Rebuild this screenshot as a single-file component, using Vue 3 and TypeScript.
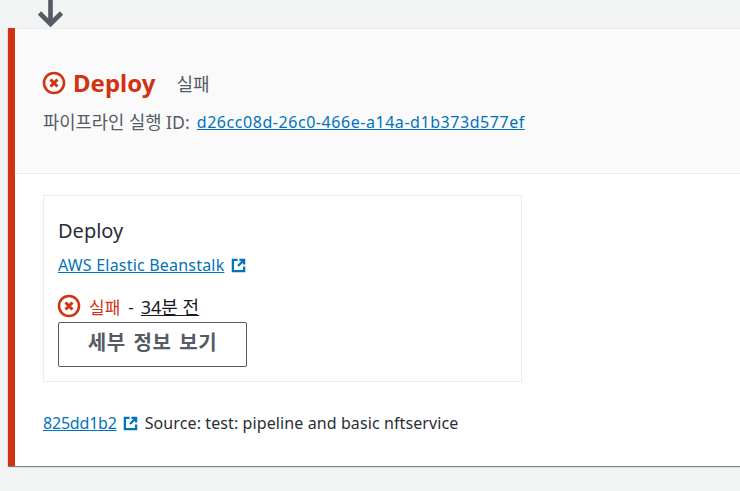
<script setup lang="ts">
const pipelineId = 'd26cc08d-26c0-466e-a14a-d1b373d577ef'
const commit = '825dd1b2'
const message = 'Source: test: pipeline and basic nftservice'
</script>

<template>
  <div class="page">
    <div class="arrow-row">
      <svg class="arrow" width="30" height="28" viewBox="0 0 30 28" aria-hidden="true">
        <path d="M14.5 0V24M3.5 13L14.5 24L25.5 13" fill="none" stroke="#545b64" stroke-width="4.6" />
      </svg>
    </div>

    <section class="stage">
      <header class="stage-head">
        <div class="title-row">
          <svg class="err-icon" viewBox="0 0 24 24" aria-hidden="true">
            <circle cx="12" cy="12" r="10" />
            <path d="M8.5 8.5L15.5 15.5M15.5 8.5L8.5 15.5" />
          </svg>
          <h2 class="stage-name">Deploy</h2>
          <span class="stage-status">실패</span>
        </div>
        <p class="run-id">
          <span>파이프라인 실행 ID:</span>
          <a href="#" class="link id-link">{{ pipelineId }}</a>
        </p>
      </header>

      <div class="stage-body">
        <div class="action">
          <div class="action-name">Deploy</div>
          <div class="provider">
            <a href="#" class="link">AWS Elastic Beanstalk</a>
            <svg class="ext" width="15" height="15" viewBox="0 0 16 16" aria-hidden="true">
              <path d="M7 2H2V14H14V9M9 2H14V7M14 2L7.5 8.5" />
            </svg>
          </div>
          <div class="result">
            <svg class="err-icon" viewBox="0 0 24 24" aria-hidden="true">
              <circle cx="12" cy="12" r="10" />
              <path d="M8.5 8.5L15.5 15.5M15.5 8.5L8.5 15.5" />
            </svg>
            <span class="failed">실패</span>
            <span class="dash">-</span>
            <span class="when">34분 전</span>
          </div>
          <button class="details" type="button">세부 정보 보기</button>
        </div>

        <div class="revision">
          <a href="#" class="link commit">{{ commit }}</a>
          <svg class="ext" width="15" height="15" viewBox="0 0 16 16" aria-hidden="true">
            <path d="M7 2H2V14H14V9M9 2H14V7M14 2L7.5 8.5" />
          </svg>
          <span class="message">{{ message }}</span>
        </div>
      </div>
    </section>
  </div>
</template>

<style>
html,
body {
  margin: 0;
  background: #f2f3f3;
  overflow: hidden;
}
</style>

<style scoped>
.page {
  height: 491px;
  overflow: hidden;
  font-family: 'Noto Sans', 'Noto Sans CJK KR', sans-serif;
  font-size: 16px;
  color: #16191f;
}

.arrow-row {
  height: 28px;
  padding-left: 36px;
}

.arrow {
  display: block;
}

.stage {
  margin-left: 8px;
  height: 438px;
  box-sizing: border-box;
  background: #fff;
  border-left: 7px solid #d13212;
  box-shadow: 0 1px 1px 0 rgba(0, 28, 36, 0.5);
}

.stage-head {
  height: 146px;
  box-sizing: border-box;
  padding: 38px 28px 0;
  background: #fafafa;
  border-top: 1px solid #eaeded;
  border-bottom: 1px solid #eaeded;
}

.title-row {
  display: flex;
  align-items: center;
  height: 32px;
}

.err-icon {
  width: 24px;
  height: 24px;
  margin-left: -1px;
  margin-right: 7px;
  fill: none;
  stroke: #d13212;
  flex: none;
}

.err-icon circle {
  stroke-width: 2.6;
}

.err-icon path {
  stroke-width: 3;
}

.stage-name {
  margin: 0;
  font-size: 24px;
  line-height: 32px;
  font-weight: 700;
  color: #d13212;
}

.stage-status {
  margin-left: 21px;
  font-size: 18px;
  color: #545b64;
}

.run-id {
  display: flex;
  gap: 7px;
  margin: 11px 0 0;
  line-height: 24px;
  font-size: 17.7px;
  color: #545b64;
}

.link {
  color: #0073bb;
  text-decoration: underline;
}

.id-link {
  font-size: 16px;
  letter-spacing: 0.55px;
}

.stage-body {
  padding: 21px 28px 0;
}

.action {
  width: 479px;
  height: 187px;
  box-sizing: border-box;
  padding: 21px 14px 0;
  background: #fff;
  border: 1px solid #eaeded;
}

.action-name {
  font-size: 20px;
  line-height: 28px;
  color: #2a2e35;
}

.provider {
  display: flex;
  align-items: center;
  gap: 7px;
  margin-top: 9px;
  line-height: 22px;
}

.provider .link {
  letter-spacing: 0.2px;
}

.ext {
  flex: none;
  fill: none;
  stroke: #0073bb;
  stroke-width: 2.4;
}

.result {
  display: flex;
  align-items: center;
  margin-top: 18px;
  height: 24px;
  font-size: 17px;
}

.failed {
  margin-left: 1px;
  color: #d13212;
}

.dash {
  margin: 0 7px 0 8px;
}

.when {
  font-size: 18px;
  text-decoration: underline;
}

.details {
  display: block;
  width: 189px;
  height: 45px;
  margin-top: 4px;
  padding: 0 0 6px;
  box-sizing: border-box;
  background: #fff;
  border: 1px solid #545b64;
  border-radius: 2px;
  font-family: inherit;
  font-size: 20px;
  font-weight: 700;
  word-spacing: 2px;
  letter-spacing: 0.6px;
  color: #545b64;
}

.revision {
  display: flex;
  align-items: center;
  margin-top: 30px;
  line-height: 22px;
}

.commit {
  letter-spacing: -0.2px;
}

.revision .ext {
  margin-left: 6px;
}

.message {
  margin-left: 7px;
  letter-spacing: 0.1px;
  color: #2a2e35;
}
</style>
